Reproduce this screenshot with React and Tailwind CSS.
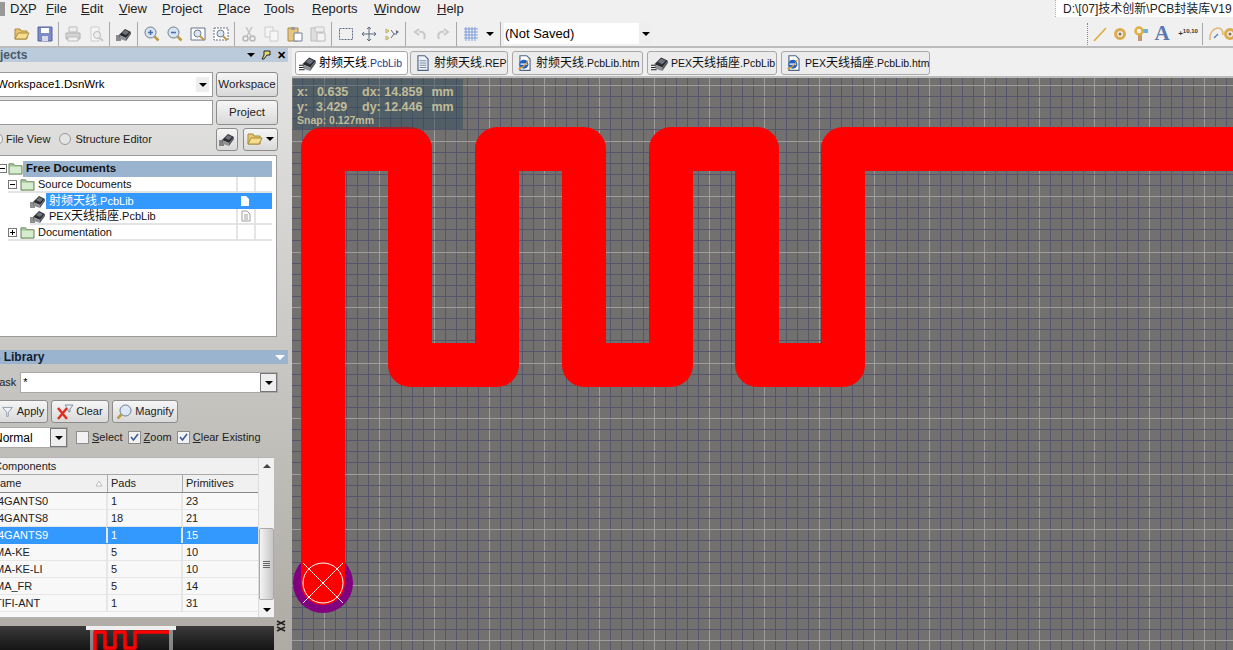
import React from 'react';

const font = { fontFamily: '"Liberation Sans", "Noto Sans CJK SC", sans-serif' };

// name + width of the slot, so the next item starts where it does in the app
const menus = [
  ['File', 35],
  ['Edit', 38],
  ['View', 43],
  ['Project', 56],
  ['Place', 46],
  ['Tools', 48],
  ['Reports', 62],
  ['Window', 63],
  ['Help', 40],
];

const rows = [
  ['4GANTS0', '1', '23'],
  ['4GANTS8', '18', '21'],
  ['4GANTS9', '1', '15'],
  ['MA-KE', '5', '10'],
  ['MA-KE-LI', '5', '10'],
  ['MA_FR', '5', '14'],
  ['TIFI-ANT', '1', '31'],
];

const tabs = [
  ['射频天线.PcbLib', 'chip', 113],
  ['射频天线.REP', 'doc', 98],
  ['射频天线.PcbLib.htm', 'web', 131],
  ['PEX天线插座.PcbLib', 'chip', 130],
  ['PEX天线插座.PcbLib.htm', 'web', 149],
];

// grid lines of the board, every fifth one is the bright one
const gridX = [];
const gridY = [];
for (let k = -60; k <= 30; k++) {
  const x = Math.round(929 + k * 11) + 0.5;
  if (x > 292 && x < 1233) gridX.push([x, k % 5 === 0]);
}
for (let k = -11; k <= 42; k++) {
  const y = Math.round(196 + k * 11.1) + 0.5;
  if (y > 78 && y < 650) gridY.push([y, k % 5 === 0]);
}

// small drawn icons, everything sits in a 16x16 box
function Icon({ name, className = 'w-4 h-4' }) {
  const p = { viewBox: '0 0 16 16', className };
  if (name === 'chip') return (
    <svg {...p}>
      <path d="M3 9l6-6 6 3-5 6z" fill="#2c2c2e" />
      <path d="M6 7l3-3 4 2-3 3z" fill="#6d7480" />
      <path d="M3 9l7 3v3l-6-2z" fill="#8e9196" />
      <path d="M10 12l5-6v2l-5 7z" fill="#55585e" />
      <path d="M0 10h4M0 12h4M0 14h5" stroke="#222" />
    </svg>
  );
  if (name === 'doc') return (
    <svg {...p}>
      <path d="M3.5 1.5h6l3 3v10h-9z" fill="#eef2f8" stroke="#4f6284" />
      <path d="M5 6h6M5 8h6M5 10h6M5 12h6" stroke="#7b8ca8" />
    </svg>
  );
  if (name === 'web') return (
    <svg {...p}>
      <path d="M3.5 1.5h6l3 3v10h-9z" fill="#fff" stroke="#4f6284" />
      <circle cx="7" cy="9" r="4" fill="#1f5fc8" />
      <path d="M4 9h6" stroke="#fff" />
      <path d="M2 13c3 0 7-3 9-8" stroke="#e8a020" fill="none" />
    </svg>
  );
  if (name === 'folder') return (
    <svg {...p}>
      <path d="M1 3h5l1 2h8v9H1z" fill="#9fcb96" stroke="#75866a" />
      <path d="M2 6h12v7H2z" fill="#d6eccf" />
    </svg>
  );
  if (name === 'open') return (
    <svg {...p}>
      <path d="M1 3h5l1 2h6v8H1z" fill="#e8c66a" stroke="#a98a3c" />
      <path d="M4 7h11l-3 6H1z" fill="#f6dc8c" stroke="#a98a3c" />
    </svg>
  );
  if (name === 'save') return (
    <svg {...p}>
      <path d="M1 1h14v14H1z" fill="#7c8cc8" stroke="#55609a" />
      <path d="M4 2h8v5H4z" fill="#fff" />
      <path d="M5 10h6v5H5z" fill="#d8dbe6" />
    </svg>
  );
  if (name === 'print') return (
    <svg {...p}>
      <path d="M4 1h8v5H4z" fill="#eee" stroke="#bbb" />
      <path d="M1 7h14v6H1z" fill="#d4d4d4" stroke="#b0b0b0" />
      <path d="M3 11h10v4H3z" fill="#f2f2f2" stroke="#bbb" />
    </svg>
  );
  if (name === 'preview') return (
    <svg {...p}>
      <path d="M3 1h8v14H3z" fill="#f6f6f6" stroke="#ccc" />
      <circle cx="9" cy="9" r="3.5" fill="#eee" stroke="#bbb" />
      <path d="M12 12l3 3" stroke="#c8c8c8" strokeWidth="2" />
    </svg>
  );
  if (name === 'zoomin' || name === 'zoomout') return (
    <svg {...p}>
      <circle cx="6.5" cy="6.5" r="5.5" fill="#d8e4f0" stroke="#6b7a8c" />
      <path d="M4 6.5h5" stroke="#4a6ea8" strokeWidth="1.5" />
      {name === 'zoomin' && <path d="M6.5 4v5" stroke="#4a6ea8" strokeWidth="1.5" />}
      <path d="M10.5 10.5l4 4" stroke="#c09a40" strokeWidth="2.5" />
    </svg>
  );
  if (name === 'fit' || name === 'fitdash') return (
    <svg {...p}>
      <path d="M1 2h14v12H1z" fill="#fff" stroke="#67758a" strokeDasharray={name === 'fitdash' ? '2 1' : undefined} />
      <circle cx="7.5" cy="7.5" r="3.5" fill="#dbe6f2" stroke="#6b7a8c" />
      <path d="M10 10l4 4" stroke="#c09a40" strokeWidth="2" />
    </svg>
  );
  if (name === 'cut') return (
    <svg {...p}>
      <path d="M5 1l5 9M11 1L6 10" stroke="#c4c4c4" strokeWidth="1.5" />
      <circle cx="4.5" cy="12.5" r="2.5" fill="none" stroke="#b8b8b8" strokeWidth="1.5" />
      <circle cx="11.5" cy="12.5" r="2.5" fill="none" stroke="#b8b8b8" strokeWidth="1.5" />
    </svg>
  );
  if (name === 'copy') return (
    <svg {...p}>
      <path d="M1 1h8v10H1z" fill="#f6f6f6" stroke="#ccc" />
      <path d="M6 5h8v10H6z" fill="#f6f6f6" stroke="#ccc" />
    </svg>
  );
  if (name === 'paste') return (
    <svg {...p}>
      <path d="M1 2h10v13H1z" fill="#e6c77e" stroke="#a88c4c" />
      <path d="M4 1h4v3H4z" fill="#9a9a9a" />
      <path d="M7 7h8v8H7z" fill="#fff" stroke="#6f7f98" />
    </svg>
  );
  if (name === 'paste2') return (
    <svg {...p}>
      <path d="M1 2h10v13H1z" fill="#dedede" stroke="#bbb" />
      <path d="M5 1h9v5H5z" fill="#eee" stroke="#c4c4c4" />
      <path d="M7 7h8v8H7z" fill="#f4f4f4" stroke="#bbb" />
    </svg>
  );
  if (name === 'select') return (
    <svg {...p}>
      <path d="M1.5 2.5h13v11h-13z" fill="none" stroke="#5d6b80" strokeDasharray="2 1" />
    </svg>
  );
  if (name === 'move') return (
    <svg {...p}>
      <path d="M8 1v14M1 8h14M6 3l2-2 2 2M6 13l2 2 2-2M3 6L1 8l2 2M13 6l2 2-2 2" fill="none" stroke="#5d6b80" />
    </svg>
  );
  if (name === 'cross') return (
    <svg {...p}>
      <path d="M2 3l3 2-3 2zM2 10l3 2-3 2z" fill="#f4e9b0" stroke="#b8a860" />
      <path d="M7 4l3 4-3 4M10 8h3" fill="none" stroke="#5d6b80" />
      <path d="M12 4l3 2-3 2z" fill="#5d6b80" />
    </svg>
  );
  if (name === 'undo' || name === 'redo') return (
    <svg {...p} className={`${className} ${name === 'redo' ? '-scale-x-100' : ''}`}>
      <path d="M12 13c2-4 0-8-5-7M7 3L3 6l4 3" fill="none" stroke="#c8c8c8" strokeWidth="2" />
    </svg>
  );
  if (name === 'grid') return (
    <svg {...p}>
      <path d="M1 3h14M1 6h14M1 9h14M1 12h14M3 1v14M6 1v14M9 1v14M12 1v14" stroke="#7c9cd8" />
    </svg>
  );
  if (name === 'line') return (
    <svg {...p}>
      <path d="M2 15L14 2" stroke="#dcac3c" strokeWidth="1.6" />
    </svg>
  );
  if (name === 'pad') return (
    <svg {...p}>
      <circle cx="8" cy="8" r="4.5" fill="none" stroke="#dcac50" strokeWidth="3" />
      <circle cx="8" cy="8" r="1.5" fill="#8a7040" />
    </svg>
  );
  if (name === 'via') return (
    <svg {...p}>
      <path d="M6 8h4v7H6z" fill="#c89868" />
      <path d="M10 3h6v4h-6z" fill="#68b4d8" />
      <circle cx="7" cy="5" r="3.5" fill="none" stroke="#e0b040" strokeWidth="2.5" />
    </svg>
  );
  if (name === 'arc') return (
    <svg {...p}>
      <path d="M2 14C1 7 6 2 10 2s5 3 5 7" fill="none" stroke="#e0b878" strokeWidth="1.6" />
      <path d="M6 12l4-4" stroke="#5a78c0" strokeWidth="1.3" />
    </svg>
  );
  if (name === 'funnel') return (
    <svg {...p}>
      <path d="M2 3h12L9 9v5H7V9z" fill="#eef3f8" stroke="#7f8ea0" />
    </svg>
  );
  if (name === 'clear') return (
    <svg {...p}>
      <path d="M1 4l9 11M10 4L1 15" stroke="#e03020" strokeWidth="2.5" />
      <path d="M8 1h8l-3 4v3l-2-1V5z" fill="#eef3f8" stroke="#7f8ea0" />
    </svg>
  );
  if (name === 'magnify') return (
    <svg {...p}>
      <circle cx="9.5" cy="6.5" r="5.5" fill="#dbe8f6" stroke="#6b7a8c" />
      <path d="M5.5 10.5l-4 4" stroke="#c09a40" strokeWidth="2.5" />
    </svg>
  );
  return null;
}

function Caret({ className = '' }) {
  return <span className={`w-0 h-0 border-x-[4px] border-x-transparent border-t-[4px] border-t-black ${className}`} />;
}

function Sep() {
  return <span className="w-px h-[24px] bg-[#a8a8a8] mx-[2px] shrink-0" />;
}

function Tool({ name, w = 'w-[23px]' }) {
  return (
    <span className={`${w} h-[24px] flex items-center justify-center shrink-0`}>
      <Icon name={name} className="w-4 h-4 shrink-0" />
    </span>
  );
}

function Btn({ children, className = '' }) {
  return (
    <div className={`h-[23px] flex items-center justify-center gap-[3px] rounded-[3px] border border-[#8c8c8c] bg-gradient-to-b from-[#f6f6f6] to-[#d9d9d9] text-[#222] ${className}`}>
      {children}
    </div>
  );
}

function Check({ on, ul, rest }) {
  return (
    <div className="flex items-center gap-[3px] shrink-0">
      <span className="w-[13px] h-[13px] border border-[#8d8d8d] bg-[#f2f2f2] flex items-center justify-center">
        {on && (
          <svg viewBox="0 0 11 11" className="w-[11px] h-[11px]">
            <path d="M2 5l2.5 3L9 2" fill="none" stroke="#3d5a9c" strokeWidth="1.6" />
          </svg>
        )}
      </span>
      <span className="text-[11px] text-[#222] leading-none whitespace-nowrap">
        <u>{ul}</u>{rest}
      </span>
    </div>
  );
}

// the Chinese runs are a point bigger than the latin ones
function Label({ text, tint = '' }) {
  return (
    <span className={tint}>
      {text.split(/([\u4e00-\u9fff]+)/).map((part, i) =>
        i % 2 ? <span key={i} className={`text-[12px] ${tint ? 'text-black' : ''}`}>{part}</span> : part
      )}
    </span>
  );
}

function Tree() {
  const cells = (
    <>
      <span className="w-[18px] h-full border-l-2 border-[#e4e4e4] shrink-0" />
      <span className="w-[18px] h-full border-l-2 border-[#e4e4e4] shrink-0" />
    </>
  );
  return (
    <div className="ml-[-2px] w-[279px] h-[182px] mt-[6px] bg-white border border-[#9a9a9a] pt-[4px] text-[11px] leading-none text-[#111]">
      <div className="flex items-center h-[17px]">
        <span className="w-[9px] h-[9px] ml-[-1px] border border-[#777] bg-white shrink-0 flex items-center justify-center">
          <span className="w-[5px] h-px bg-black" />
        </span>
        <Icon name="folder" className="w-[15px] h-[15px] ml-[1px] shrink-0" />
        <div className="flex-1 h-[16px] mr-[4px] bg-[#9ab4d0] font-bold text-[11.5px] flex items-center pl-[3px]">Free Documents</div>
      </div>
      <div className="flex items-center h-[16px] ml-[9px] mr-[4px] border-b-2 border-[#e4e4e4]">
        <span className="w-[9px] h-[9px] border border-[#777] bg-white shrink-0 flex items-center justify-center">
          <span className="w-[5px] h-px bg-black" />
        </span>
        <Icon name="folder" className="w-[15px] h-[15px] ml-[3px] shrink-0" />
        <span className="ml-[3px] flex-1">Source Documents</span>
        {cells}
      </div>
      <div className="flex items-center h-[16px] ml-[31px] mr-[4px]">
        <Icon name="chip" className="w-[16px] h-[16px] shrink-0" />
        <div className="flex-1 h-full bg-[#3399ff] text-white flex items-center pl-[3px]">
          <span className="flex-1"><Label text="射频天线.PcbLib" /></span>
          <span className="w-[18px] h-full flex items-center justify-center">
            <svg viewBox="0 0 10 12" className="w-[10px] h-[12px]">
              <path d="M1 1h5l3 3v7H1z" fill="#fff" />
            </svg>
          </span>
          <span className="w-[18px]" />
        </div>
      </div>
      <div className="flex items-center h-[16px] ml-[31px] mr-[4px] border-b-2 border-[#e4e4e4]">
        <Icon name="chip" className="w-[16px] h-[16px] shrink-0" />
        <span className="flex-1 pl-[3px]"><Label text="PEX天线插座.PcbLib" /></span>
        <span className="w-[18px] h-full border-l-2 border-[#e4e4e4] flex items-center justify-center shrink-0">
          <svg viewBox="0 0 10 12" className="w-[10px] h-[12px]">
            <path d="M1 1h5l3 3v7H1zM3 5h4M3 7h4M3 9h4" fill="#fff" stroke="#a0a0a0" />
          </svg>
        </span>
        <span className="w-[18px] h-full border-l-2 border-[#e4e4e4] shrink-0" />
      </div>
      <div className="flex items-center h-[16px] ml-[9px] mr-[4px] border-b-2 border-[#e4e4e4]">
        <span className="w-[9px] h-[9px] border border-[#777] bg-white shrink-0 relative flex items-center justify-center">
          <span className="w-[5px] h-px bg-black" />
          <span className="absolute w-px h-[5px] bg-black" />
        </span>
        <Icon name="folder" className="w-[15px] h-[15px] ml-[3px] shrink-0" />
        <span className="ml-[3px] flex-1">Documentation</span>
        {cells}
      </div>
    </div>
  );
}

function ComponentsTable() {
  return (
    <div className="mt-[9px] ml-[-2px] w-[276px] h-[161px] border border-[#b4b4b4] bg-[#f8f8f8] flex text-[11px] leading-none text-[#222]">
      <div className="w-[259px] shrink-0">
        <div className="h-[17px] bg-[#f0f0f0] border-b border-[#a8a8a8] flex items-center overflow-hidden">
          <span className="ml-[-5px] whitespace-nowrap">Components</span>
        </div>
        <div className="h-[18px] bg-[#f0f0f0] border-b border-[#888] flex items-center">
          <span className="w-[109px] h-full flex items-center justify-between pr-[4px] border-r border-[#aaa] overflow-hidden">
            <span className="ml-[-7px]">Name</span>
            <svg viewBox="0 0 8 7" className="w-[8px] h-[7px]">
              <path d="M4 1L7 6H1z" fill="#fff" stroke="#bbb" />
            </svg>
          </span>
          <span className="w-[75px] h-full flex items-center pl-[3px] border-r border-[#aaa]">Pads</span>
          <span className="flex-1 pl-[3px]">Primitives</span>
        </div>
        {rows.map((r, i) => (
          <div
            key={r[0]}
            className={`h-[17px] flex items-center border-b ${i === 2 ? 'bg-[#3399ff] text-white border-[#3399ff] outline-1 outline-dotted outline-[#b87830] -outline-offset-1' : 'border-[#e6e6e6]'}`}
          >
            <span className="w-[109px] h-full flex items-center border-r-2 border-[#e6e6e6] overflow-hidden">
              <span className={i < 3 ? 'ml-[-1px] whitespace-nowrap' : 'ml-[-4px] whitespace-nowrap'}>{r[0]}</span>
            </span>
            <span className="w-[75px] h-full flex items-center pl-[3px] border-r-2 border-[#e6e6e6]">{r[1]}</span>
            <span className="flex-1 pl-[3px]">{r[2]}</span>
          </div>
        ))}
      </div>
      <div className="flex-1 flex flex-col items-center bg-[#f2f2f2] border-l border-[#dcdcdc] pt-[6px]">
        <span className="w-0 h-0 border-x-[4px] border-x-transparent border-b-[4px] border-b-[#444]" />
        <div className="mt-[60px] w-[15px] h-[72px] shrink-0 border border-[#aaa] rounded-[2px] bg-gradient-to-r from-[#f4f4f4] to-[#c6c6c6] flex flex-col items-center justify-center gap-px">
          <span className="w-[7px] h-px bg-[#666]" />
          <span className="w-[7px] h-px bg-[#666]" />
          <span className="w-[7px] h-px bg-[#666]" />
          <span className="w-[7px] h-px bg-[#666]" />
        </div>
        <Caret className="block mt-[8px] border-t-[#777]" />
      </div>
    </div>
  );
}

function LeftPanel() {
  return (
    <div className="w-[292px] shrink-0 h-full bg-gradient-to-b from-[#e6e6e6] to-[#aeaba4] overflow-hidden flex flex-col">
      <div className="h-[14px] w-[288px] shrink-0 bg-[#bccbdb] flex items-center justify-between pr-[2px]">
        <span className="ml-[-20px] text-[12px] font-bold text-[#4a5a6a] leading-none">Projects</span>
        <div className="flex items-center gap-[6px]">
          <Caret />
          <svg viewBox="0 0 10 10" className="w-[10px] h-[10px]">
            <path d="M3 1h6v4H6L3 9H1l2-4z" fill="#e8d870" stroke="#222" />
          </svg>
          <span className="text-[11px] leading-none font-bold text-black">✕</span>
        </div>
      </div>
      <div className="pt-[10px] w-[278px] flex flex-col shrink-0">
        <div className="flex gap-[3px]">
          <div className="flex-1 h-[25px] bg-white border border-[#9a9a9a] ml-[-2px] flex items-center justify-between pr-[3px] text-[11.5px] overflow-hidden">
            <span className="ml-[-2px] whitespace-nowrap">Workspace1.DsnWrk</span>
            <span className="w-[13px] h-[15px] bg-[#eee] flex items-center justify-center"><Caret /></span>
          </div>
          <Btn className="w-[62px] h-[25px] text-[11.5px]">Workspace</Btn>
        </div>
        <div className="flex gap-[3px] mt-[3px]">
          <div className="flex-1 h-[25px] bg-white border border-[#9a9a9a] ml-[-2px]" />
          <Btn className="w-[62px] h-[25px] text-[11.5px]">Project</Btn>
        </div>
        <div className="flex items-center h-[20px] mt-[4px] text-[11px] leading-none text-[#222]">
          <span className="w-[12px] h-[12px] ml-[-9px] rounded-full border border-[#999] bg-[#eee] mr-[3px] shrink-0" />
          <span>File View</span>
          <span className="w-[12px] h-[12px] ml-[9px] rounded-full border border-[#999] bg-[#e4e4e4] mr-[4px] shrink-0" />
          <span>Structure Editor</span>
          <div className="ml-auto flex gap-[5px]">
            <Btn className="w-[22px] h-[20px]"><Icon name="chip" /></Btn>
            <Btn className="w-[35px] h-[20px]"><Icon name="open" /><Caret /></Btn>
          </div>
        </div>
        <Tree />
      </div>
      <div className="h-[14px] w-[288px] bg-[#9ab4d0] mt-[13px] flex items-center justify-between pr-[3px] shrink-0">
        <span className="ml-[-25px] text-[12px] font-bold text-[#102030] leading-none whitespace-nowrap">PCB Library</span>
        <Caret className="border-t-white border-x-[5px] border-t-[5px]" />
      </div>
      <div className="w-[278px] flex flex-col pt-[8px] shrink-0">
        <div className="flex items-center h-[21px]">
          <span className="text-[11px] ml-[-10px] text-[#222]">Mask</span>
          <div className="ml-[4px] flex-1 h-full bg-white border border-[#a8a8a8] flex items-center justify-between text-[11px] pl-[2px]">
            <span>*</span>
            <span className="w-[17px] h-[19px] border border-[#777] bg-[#eee] flex items-center justify-center"><Caret /></span>
          </div>
        </div>
        <div className="flex gap-[3px] mt-[7px] ml-[-3px]">
          <Btn className="w-[51px] text-[11px]"><Icon name="funnel" className="w-[13px] h-[13px]" />Apply</Btn>
          <Btn className="w-[58px] text-[11px]"><Icon name="clear" />Clear</Btn>
          <Btn className="w-[66px] text-[11px]"><Icon name="magnify" />Magnify</Btn>
        </div>
        <div className="flex items-center gap-[5px] mt-[4px]">
          <div className="w-[69px] h-[21px] ml-[-1px] mr-[3px] shrink-0 bg-white border border-[#a8a8a8] flex items-center justify-between overflow-hidden text-[12px]">
            <span className="ml-[-6px]">Normal</span>
            <span className="w-[17px] h-[19px] border border-[#777] bg-[#eee] flex items-center justify-center"><Caret /></span>
          </div>
          <Check ul="S" rest="elect" />
          <Check on ul="Z" rest="oom" />
          <Check on ul="C" rest="lear Existing" />
        </div>
        <ComponentsTable />
      </div>
      <div className="flex flex-1 items-stretch min-h-0 mt-[8px]">
        <div className="w-[274px] bg-gradient-to-b from-[#3a3a3a] to-[#151515] overflow-hidden">
          <svg viewBox="0 0 90 24" className="ml-[86px] w-[90px] h-[24px]">
            <path d="M0 0h90v4H0z" fill="#eee" />
            <path d="M5 4v20M7 4v20M84 4v20M86 4v20" stroke="#eee" />
            <path d="M9 24V6h10v16h10V6h10v16h10V6h34" fill="none" stroke="#f00" strokeWidth="3.5" strokeLinejoin="round" />
          </svg>
        </div>
        <svg viewBox="0 0 12 12" className="w-[12px] h-[12px] ml-[1px] mt-[-6px] shrink-0">
          <path d="M2 1l8 4M10 1L2 5M2 7l8 4M10 7l-8 4" stroke="#222" strokeWidth="1.5" />
        </svg>
      </div>
    </div>
  );
}

function Canvas() {
  return (
    <div className="flex-1 relative overflow-hidden bg-[#737070]">
      <svg className="block w-full h-full" viewBox="292 78 941 572">
        {gridX.map(([x, major]) => (
          <path key={x} d={`M${x} 78V650`} stroke={major ? '#a09c9c' : '#55556e'} shapeRendering="crispEdges" />
        ))}
        {gridY.map(([y, major]) => (
          <path key={y} d={`M292 ${y}H1233`} stroke={major ? '#a09c9c' : '#55556e'} shapeRendering="crispEdges" />
        ))}
        <circle cx="323" cy="583" r="30" fill="#800080" />
        <path
          d="M323 583V149H410V365H497V149H584V365H671V149H757V365H843V149H1240"
          fill="none"
          stroke="#ff0000"
          strokeWidth="44"
          strokeLinejoin="round"
        />
        <circle cx="323" cy="583" r="22" fill="#ff0000" />
        <circle cx="323" cy="583" r="20" fill="none" stroke="#fff" />
        <path d="M303 563L343 603M343 563L303 603" stroke="#fff" />
      </svg>
      <div className="absolute left-[1px] top-[1px] w-[170px] h-[50px] bg-[#2a4a5a]/45 pl-[4px] pt-[7px] text-[#c0bc98] font-bold leading-none">
        <div className="flex text-[12.5px] h-[15px]">
          <span className="w-[20px]">x:</span><span className="w-[45px]">0.635</span><span>dx: 14.859</span><span className="ml-[9px]">mm</span>
        </div>
        <div className="flex text-[12.5px] h-[14px]">
          <span className="w-[19px]">y:</span><span className="w-[46px]">3.429</span><span>dy: 12.446</span><span className="ml-[9px]">mm</span>
        </div>
        <div className="text-[10.5px]">Snap: 0.127mm</div>
      </div>
    </div>
  );
}

export default function App() {
  return (
    <div className="w-[1233px] h-[650px] overflow-hidden bg-[#f0f0f0] flex flex-col text-black" style={font}>
      <div className="h-[19px] flex items-center shrink-0 text-[13px] leading-none text-[#222] pb-[2px]">
        <span className="w-[5px] h-[14px] bg-[#999] shrink-0" />
        <span className="ml-[5px] w-[36px] shrink-0">D<u>X</u>P</span>
        {menus.map(([m, w]) => (
          <span key={m} className="shrink-0" style={{ width: w }}>
            <u>{m[0]}</u>{m.slice(1)}
          </span>
        ))}
        <div className="ml-auto h-full w-[178px] bg-white overflow-hidden whitespace-nowrap pl-[7px] flex items-center text-[12px] border-l border-dotted border-[#aaa]">
          D:\[07]技术创新\PCB封装库V19
        </div>
      </div>
      <div className="h-[29px] pt-[2px] flex items-center shrink-0 border-b-2 border-[#bcbcbc] overflow-hidden">
        <span className="w-[10px] shrink-0" />
        <Tool name="open" />
        <Tool name="save" />
        <Sep />
        <Tool name="print" />
        <Tool name="preview" />
        <Sep />
        <Tool name="chip" />
        <Sep />
        <Tool name="zoomin" />
        <Tool name="zoomout" />
        <Tool name="fit" />
        <Tool name="fitdash" />
        <Sep />
        <Tool name="cut" />
        <Tool name="copy" />
        <Tool name="paste" />
        <Tool name="paste2" />
        <Sep />
        <Tool name="select" />
        <Tool name="move" />
        <Tool name="cross" />
        <Sep />
        <Tool name="undo" />
        <Tool name="redo" />
        <Sep />
        <Tool name="grid" />
        <Caret className="mx-[4px]" />
        <Sep />
        <div className="w-[148px] h-[21px] ml-[1px] bg-white flex items-center justify-between pl-[1px] text-[13px] shrink-0">
          <span>(Not Saved)</span>
          <span className="w-[13px] h-full bg-[#eee] flex items-center justify-center"><Caret /></span>
        </div>
        <div className="ml-auto flex items-center shrink-0 w-[146px]">
          <span className="w-px h-[22px] border-l border-dotted border-[#888] mr-[2px] shrink-0" />
          <Tool name="line" w="w-[20px]" />
          <Tool name="pad" w="w-[20px]" />
          <Tool name="via" w="w-[20px]" />
          <span className="w-[24px] shrink-0 text-center text-[21px] font-bold leading-none text-[#5a78b0]" style={{ fontFamily: '"Liberation Serif", serif' }}>A</span>
          <span className="w-[28px] shrink-0 text-[8px] font-bold leading-none text-[#333] text-center whitespace-nowrap">+<sup>10,10</sup></span>
          <span className="w-px h-[22px] bg-[#aaa] shrink-0" />
          <Tool name="arc" w="w-[25px]" />
          <Tool name="pad" w="w-[4px]" />
        </div>
      </div>
      <div className="flex flex-1 min-h-0">
        <LeftPanel />
        <div className="flex-1 flex flex-col min-w-0">
          <div className="h-[30px] shrink-0 flex items-start gap-[4px] pl-[3px] pt-[3px] border-b-2 border-[#bcbcbc]">
            {tabs.map(([t, ic, w], i) => (
              <div
                key={t}
                style={{ width: w }}
                className={`h-[24px] shrink-0 rounded-[3px] border border-[#a8a8a8] flex items-center gap-[2px] pl-[3px] text-[10.5px] leading-none whitespace-nowrap overflow-hidden text-[#111] ${i === 0 ? 'bg-white mr-[-2px]' : 'bg-[#ececec]'}`}
              >
                <Icon name={ic} className="w-[18px] h-[18px] shrink-0" />
                <Label text={t} tint={i === 0 ? 'text-[#1a3a8a]' : ''} />
              </div>
            ))}
          </div>
          <Canvas />
        </div>
      </div>
    </div>
  );
}
